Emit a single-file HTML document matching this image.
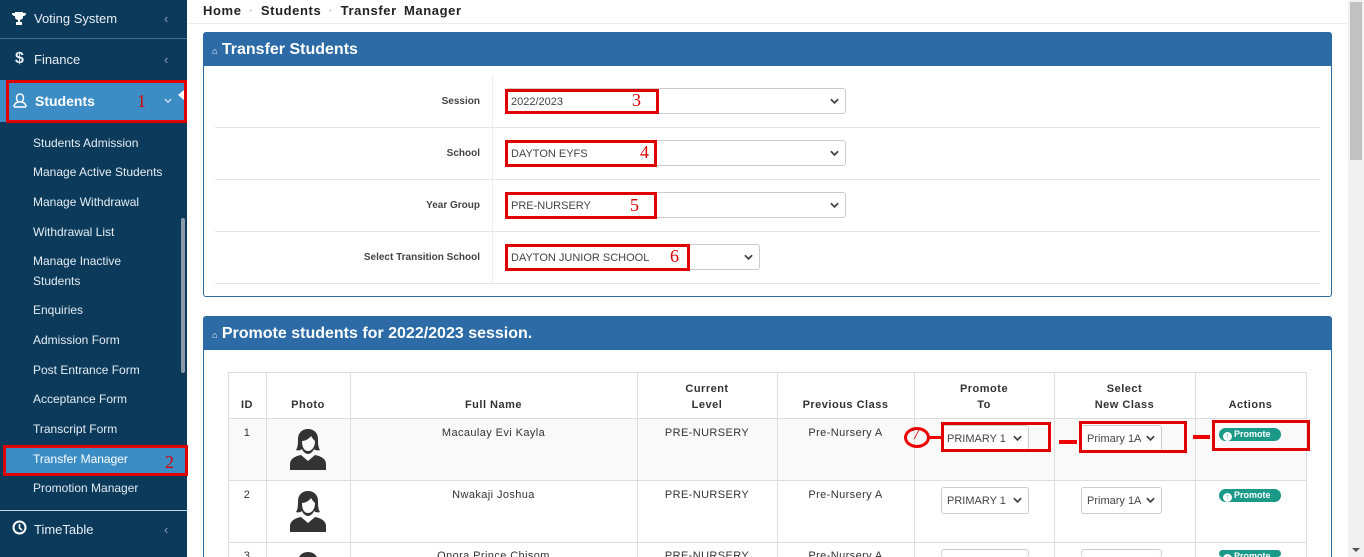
<!DOCTYPE html>
<html><head><meta charset="utf-8"><style>
*{box-sizing:border-box;margin:0;padding:0}
html,body{width:1364px;height:557px;overflow:hidden}
body{background:#fff;font-family:"Liberation Sans",sans-serif;position:relative;color:#333}
.sb{position:absolute;left:0;top:0;width:187px;height:557px;background:#0c3a5b}
.a{position:absolute}
.nav{position:absolute;left:15px;color:#e8eef3;font-size:13px}
.sub{position:absolute;left:33px;color:#e6edf2;font-size:12px}
.chev{position:absolute;left:164px;color:#8aa3b8;font-size:13px}
.red{position:absolute;border:3px solid #e00000}
.num{position:absolute;color:#d00;font-family:"Liberation Serif",serif;font-size:18px}
.panel{position:absolute;left:203px;width:1129px;border:1px solid #2a6aa5;border-radius:3px;background:#fff}
.ph{background:#2c6ba6;height:33px;color:#fff;font-weight:bold;font-size:16px;padding:8px 0 0 8px}
.lbl{position:absolute;font-size:10px;font-weight:bold;color:#444;text-align:right;width:275px;left:205px}
.sel{position:absolute;left:505px;height:26px;border:1px solid #ccc;border-radius:3px;font-size:11px;color:#444;padding:7px 0 0 5px;background:#fff}
.ch{position:absolute;right:6px;top:9px}
.hl{position:absolute;left:215px;width:1105px;height:1px;background:#e5e5e5}
.vl{position:absolute;width:1px;background:#ddd}
.hh{position:absolute;height:1px;background:#ddd;left:228px;width:1078px}
.th{position:absolute;font-size:11px;font-weight:bold;color:#333;text-align:center;letter-spacing:.5px;line-height:16px}
.td{position:absolute;font-size:11px;color:#333;text-align:center;letter-spacing:.4px}
.ss{position:absolute;height:27px;border:1px solid #ccc;border-radius:3px;font-size:11px;color:#444;padding:7px 0 0 5px;background:#fff}
.btn{position:absolute;left:1219px;width:62px;height:13px;border-radius:7px;background:#1b9a8a;color:#fff;font-size:9px;font-weight:bold;padding:1px 0 0 4px;white-space:nowrap}
.btn b{display:inline-block;width:9px;height:9px;border-radius:50%;background:#fff;color:#1b9a8a;font-size:7px;text-align:center;line-height:9px;vertical-align:-1px;margin-right:2px}
</style></head><body>
<svg width="0" height="0" style="position:absolute"><defs><symbol id="cv" viewBox="0 0 10 7"><path d="M1 1l4 4 4-4" fill="none" stroke="#444" stroke-width="2"/></symbol>
<symbol id="usr" viewBox="0 0 40 42"><path fill="#333" d="M20 1c-6 0-10 4-10 10 0 4 0 8-2 11 3 1 5 0 6-1 1 3 4 5 6 5s5-2 6-5c1 1 3 2 6 1-2-3-2-7-2-11 0-6-4-10-10-10zM14 13c3 0 7-2 9-5 1 2 3 4 4 5 0 6-3 10-7 10s-6-4-6-10zM13 27c-6 1-11 4-11 9v6h36v-6c0-5-5-8-11-9l-7 6z"/></symbol></defs></svg>
<div class="sb">
 <div class="a" style="left:0;top:38px;width:187px;height:1px;background:#4a6e8c"></div>
 <svg class="a" style="left:12px;top:12px" width="14" height="13" viewBox="0 0 14 13"><path fill="#fff" d="M3 0h8v5c0 2-2 3-4 3S3 7 3 5zM0 1h3v3C1 4 0 3 0 1zM14 1h-3v3c2 0 3-1 3-3zM6 8h2v2h2v3H4v-3h2z"/></svg>
 <div class="nav" style="top:11px;left:34px">Voting System</div><div class="chev" style="top:11px">‹</div>
 <div class="nav" style="top:50px;font-weight:bold;font-size:16px">$</div><div class="nav" style="top:52px;left:34px">Finance</div><div class="chev" style="top:52px">‹</div>
 <div class="a" style="left:0;top:80px;width:187px;height:42px;background:#3c8dc5"></div>
 <div class="red" style="left:6px;top:80px;width:181px;height:43px"></div>
 <svg class="a" style="left:13px;top:93px" width="14" height="15" viewBox="0 0 14 15"><path d="M7 1c-2 0-3.5 1.5-3.5 4S5 9 7 9s3.5-1.5 3.5-4S9 1 7 1zM1 14c0-3 2-4.5 4.5-5M13 14c0-3-2-4.5-4.5-5M1 14h12" fill="none" stroke="#fff" stroke-width="1.5"/></svg>
 <div class="nav" style="top:93px;left:35px;font-weight:bold;font-size:14px;color:#fff">Students</div>
 <div class="num" style="left:137px;top:91px">1</div>
 <svg class="a" style="left:164px;top:98px" width="8" height="6" viewBox="0 0 10 7"><path d="M1 1l4 4 4-4" fill="none" stroke="#dde" stroke-width="1.6"/></svg>
 <div class="a" style="left:178px;top:90px;width:0;height:0;border:5px solid transparent;border-right:6px solid #fff;border-left:none"></div>
 <div class="sub" style="top:136px">Students Admission</div>
 <div class="sub" style="top:165px">Manage Active Students</div>
 <div class="sub" style="top:195px">Manage Withdrawal</div>
 <div class="sub" style="top:225px">Withdrawal List</div>
 <div class="sub" style="top:251px;line-height:20px">Manage Inactive<br>Students</div>
 <div class="sub" style="top:303px">Enquiries</div>
 <div class="sub" style="top:333px">Admission Form</div>
 <div class="sub" style="top:363px">Post Entrance Form</div>
 <div class="sub" style="top:392px">Acceptance Form</div>
 <div class="sub" style="top:422px">Transcript Form</div>
 <div class="a" style="left:5px;top:446px;width:180px;height:28px;background:#3c8dc5"></div>
 <div class="red" style="left:3px;top:445px;width:185px;height:31px"></div>
 <div class="sub" style="top:452px;color:#fff">Transfer Manager</div>
 <div class="num" style="left:165px;top:452px">2</div>
 <div class="sub" style="top:481px">Promotion Manager</div>
 <div class="a" style="left:181px;top:218px;width:4px;height:155px;background:#8a9aa8;border-radius:2px"></div>
 <div class="a" style="left:0;top:510px;width:187px;height:1px;background:#c8d4de"></div>
 <svg class="a" style="left:12px;top:520px" width="15" height="15" viewBox="0 0 15 15"><circle cx="7.5" cy="7.5" r="6" fill="none" stroke="#fff" stroke-width="2"/><path d="M7.5 4v4l2.5 2" fill="none" stroke="#fff" stroke-width="1.6"/></svg>
 <div class="nav" style="top:522px;left:34px">TimeTable</div><div class="chev" style="top:522px">‹</div>
</div>
<div class="a" style="left:187px;top:0;width:1161px;height:24px;border-bottom:1px solid #eee;background:#fff"></div>
<div class="a" style="left:203px;top:3px;font-size:13px;font-weight:bold;color:#222;letter-spacing:.6px;word-spacing:3px">Home <span style="color:#ccc">·</span> Students <span style="color:#ccc">·</span> Transfer Manager</div>

<div class="panel" style="top:32px;height:265px"><div class="ph"><span style="font-size:9px">⌂</span> Transfer Students</div></div>
<div class="vl" style="left:492px;top:75px;height:208px;background:#eee"></div>
<div class="hl" style="top:127px"></div><div class="hl" style="top:179px"></div><div class="hl" style="top:231px"></div><div class="hl" style="top:283px"></div>
<div class="lbl" style="top:96px">Session</div>
<div class="lbl" style="top:148px">School</div>
<div class="lbl" style="top:200px">Year Group</div>
<div class="lbl" style="top:252px">Select Transition School</div>
<div class="sel" style="top:88px;width:341px">2022/2023<svg class="ch" width="9" height="7"><use href="#cv"/></svg></div>
<div class="sel" style="top:140px;width:341px">DAYTON EYFS<svg class="ch" width="9" height="7"><use href="#cv"/></svg></div>
<div class="sel" style="top:192px;width:341px">PRE-NURSERY<svg class="ch" width="9" height="7"><use href="#cv"/></svg></div>
<div class="sel" style="top:244px;width:255px">DAYTON JUNIOR SCHOOL<svg class="ch" width="9" height="7"><use href="#cv"/></svg></div>
<div class="red" style="left:505px;top:89px;width:154px;height:25px"></div><div class="num" style="left:632px;top:90px">3</div>
<div class="red" style="left:505px;top:140px;width:152px;height:27px"></div><div class="num" style="left:640px;top:142px">4</div>
<div class="red" style="left:505px;top:192px;width:152px;height:27px"></div><div class="num" style="left:630px;top:195px">5</div>
<div class="red" style="left:505px;top:244px;width:185px;height:27px"></div><div class="num" style="left:670px;top:246px">6</div>

<div class="panel" style="top:316px;height:241px;border-bottom:none;border-radius:3px 3px 0 0"><div class="ph"><span style="font-size:9px">⌂</span> Promote students for 2022/2023 session.</div></div>
<div class="a" style="left:228px;top:418px;width:1078px;height:62px;background:#f9f9f9"></div>
<div class="hh" style="top:372px"></div><div class="hh" style="top:418px"></div><div class="hh" style="top:480px"></div><div class="hh" style="top:542px"></div>
<div class="vl" style="left:228px;top:372px;height:185px"></div><div class="vl" style="left:266px;top:372px;height:185px"></div><div class="vl" style="left:350px;top:372px;height:185px"></div><div class="vl" style="left:637px;top:372px;height:185px"></div><div class="vl" style="left:777px;top:372px;height:185px"></div><div class="vl" style="left:914px;top:372px;height:185px"></div><div class="vl" style="left:1054px;top:372px;height:185px"></div><div class="vl" style="left:1195px;top:372px;height:185px"></div><div class="vl" style="left:1306px;top:372px;height:185px"></div>
<div class="th" style="left:228px;width:38px;top:397px">ID</div>
<div class="th" style="left:266px;width:84px;top:397px">Photo</div>
<div class="th" style="left:350px;width:287px;top:397px">Full Name</div>
<div class="th" style="left:637px;width:140px;top:381px">Current<br>Level</div>
<div class="th" style="left:777px;width:137px;top:397px">Previous Class</div>
<div class="th" style="left:914px;width:140px;top:381px">Promote<br>To</div>
<div class="th" style="left:1054px;width:141px;top:381px">Select<br>New Class</div>
<div class="th" style="left:1195px;width:111px;top:397px">Actions</div>

<svg class="a" style="left:288px;top:428px" width="40" height="42"><use href="#usr"/></svg>
<svg class="a" style="left:288px;top:490px" width="40" height="42"><use href="#usr"/></svg>
<svg class="a" style="left:288px;top:551px" width="40" height="6" viewBox="0 0 40 6"><use href="#usr" width="40" height="42"/></svg>

<div class="td" style="left:228px;width:38px;top:427px">1</div>
<div class="td" style="left:350px;width:287px;top:427px">Macaulay Evi Kayla</div>
<div class="td" style="left:637px;width:140px;top:427px">PRE-NURSERY</div>
<div class="td" style="left:777px;width:137px;top:427px">Pre-Nursery A</div>
<div class="td" style="left:228px;width:38px;top:489px">2</div>
<div class="td" style="left:350px;width:287px;top:489px">Nwakaji Joshua</div>
<div class="td" style="left:637px;width:140px;top:489px">PRE-NURSERY</div>
<div class="td" style="left:777px;width:137px;top:489px">Pre-Nursery A</div>
<div class="td" style="left:228px;width:38px;top:550px">3</div>
<div class="td" style="left:350px;width:287px;top:550px">Onora Prince Chisom</div>
<div class="td" style="left:637px;width:140px;top:550px">PRE-NURSERY</div>
<div class="td" style="left:777px;width:137px;top:550px">Pre-Nursery A</div>

<div class="ss" style="left:941px;top:425px;width:88px">PRIMARY 1<svg class="ch" width="9" height="7"><use href="#cv"/></svg></div>
<div class="ss" style="left:1081px;top:425px;width:81px">Primary 1A<svg class="ch" width="9" height="7"><use href="#cv"/></svg></div>
<div class="ss" style="left:941px;top:487px;width:88px">PRIMARY 1<svg class="ch" width="9" height="7"><use href="#cv"/></svg></div>
<div class="ss" style="left:1081px;top:487px;width:81px">Primary 1A<svg class="ch" width="9" height="7"><use href="#cv"/></svg></div>
<div class="ss" style="left:941px;top:549px;width:88px;height:8px;border-bottom:none"></div>
<div class="ss" style="left:1081px;top:549px;width:81px;height:8px;border-bottom:none"></div>
<div class="btn" style="top:428px"><b>↑</b>Promote</div>
<div class="btn" style="top:489px"><b>↑</b>Promote</div>
<div class="btn" style="top:550px;height:7px;overflow:hidden"><b>↑</b>Promote</div>

<div class="red" style="left:941px;top:422px;width:110px;height:30px"></div>
<div class="red" style="left:1079px;top:421px;width:108px;height:32px"></div>
<div class="red" style="left:1212px;top:420px;width:98px;height:31px"></div>
<div class="a" style="left:904px;top:427px;width:26px;height:21px;border:3px solid #e00;border-radius:50%"></div>
<div class="num" style="left:912px;top:426px;font-size:16px">7</div>
<div class="a" style="left:930px;top:436px;width:11px;height:3px;background:#e00"></div>
<div class="a" style="left:1059px;top:440px;width:18px;height:4px;background:#e00"></div>
<div class="a" style="left:1193px;top:435px;width:17px;height:4px;background:#e00"></div>

<div class="a" style="left:1348px;top:0;width:16px;height:557px;background:#f1f1f1"></div>
<div class="a" style="left:1350px;top:2px;width:12px;height:158px;background:#c1c1c1"></div>
<div class="a" style="left:1352px;top:548px;width:0;height:0;border:4px solid transparent;border-top:4px solid #555"></div>
</body></html>
